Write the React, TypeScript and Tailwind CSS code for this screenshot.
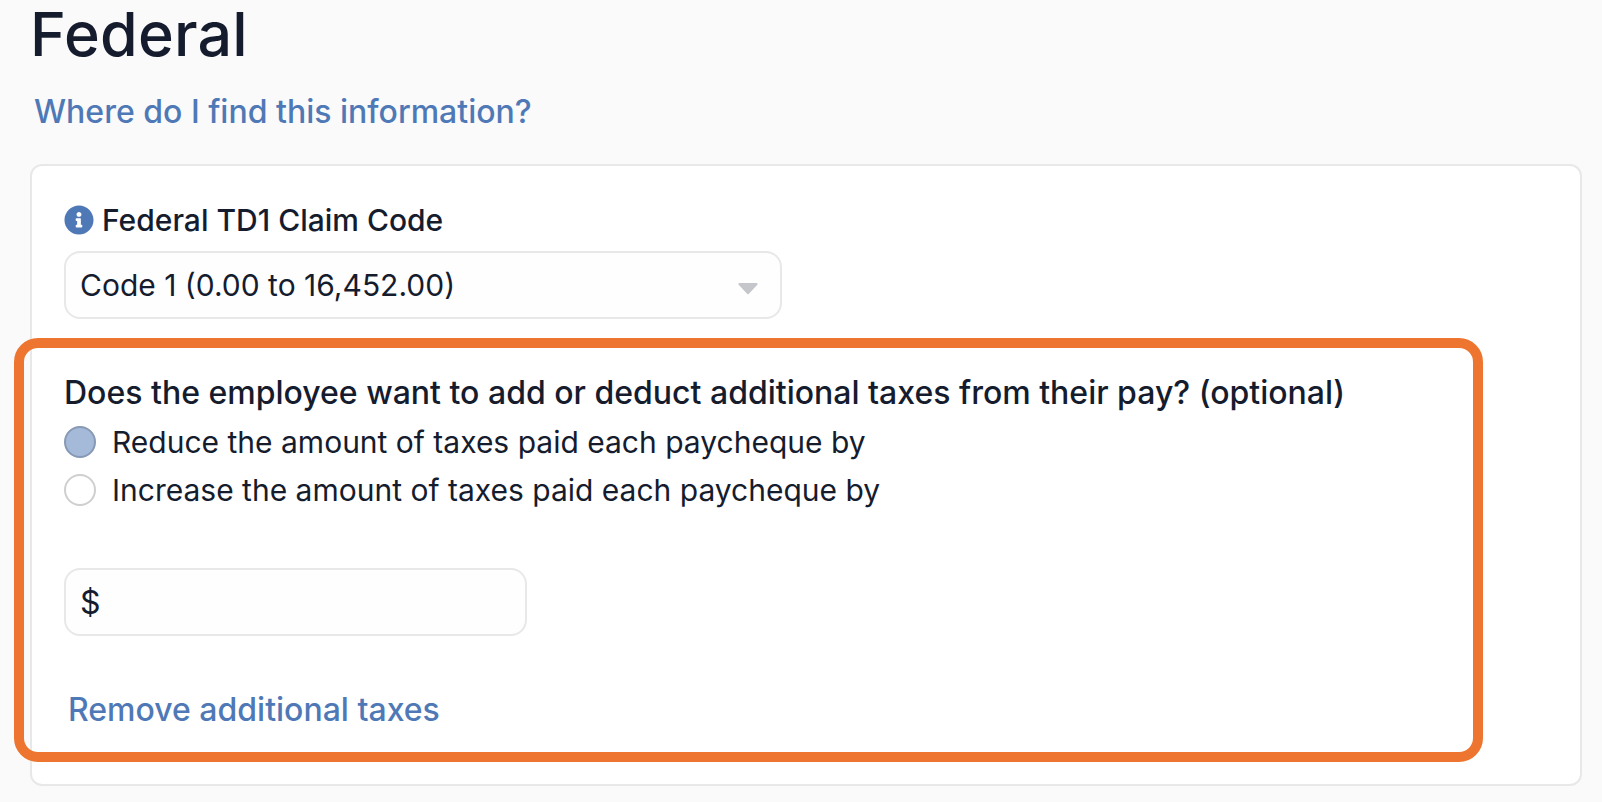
import { useState } from "react";
import { FaInfoCircle } from "react-icons/fa";

interface RadioOptionProps {
  label: string;
  checked: boolean;
  onSelect: () => void;
}

function RadioOption({ label, checked, onSelect }: RadioOptionProps) {
  return (
    <button
      type="button"
      role="radio"
      aria-checked={checked}
      onClick={onSelect}
      className="flex h-12 items-center gap-4 text-left"
    >
      <span
        className={`size-8 shrink-0 rounded-full border-2 ${
          checked ? "border-[#8799b5] bg-[#a5bad9]" : "border-[#cfcfcf] bg-white"
        }`}
      />
      <span className="whitespace-nowrap text-[30px] leading-9">{label}</span>
    </button>
  );
}

const OPTIONS = [
  "Reduce the amount of taxes paid each paycheque by",
  "Increase the amount of taxes paid each paycheque by",
];

export default function App() {
  const [selected, setSelected] = useState(0);

  return (
    <div className="h-[802px] w-[1602px] overflow-hidden bg-[#fafafa] pl-[30px] font-['Inter',sans-serif] text-[#151c2e]">
      <h1 className="h-[72px] text-[61px] font-medium leading-[68px] tracking-[0.2px]">
        Federal
      </h1>
      <a href="#" className="mt-5 ml-1 block h-10 w-fit text-[32px] font-medium leading-10 text-[#4f79b6]">
        Where do I find this information?
      </a>

      {/* Tax details card */}
      <div className="relative mt-8 h-[622px] w-[1552px] rounded-xl border-2 border-[#e8e8e8] bg-white px-8 pt-[34px]">
        <div className="flex h-10 items-center gap-2">
          <FaInfoCircle className="size-[30px] text-[#4f79b6]" />
          <span className="text-[30px] font-medium leading-10">
            Federal TD1 Claim Code
          </span>
        </div>

        <div className="mt-[11px] flex h-[68px] w-[718px] items-center justify-between rounded-2xl border-2 border-[#e8e8e8] bg-[#fefefe] pr-[22px] pl-[14px]">
          <span className="text-[30px] leading-9">Code 1 (0.00 to 16,452.00)</span>
          <svg className="mt-2 h-3 w-5" viewBox="0 0 20 12" fill="#c4c6cc">
            <path d="M1.4 0h17.2c.9 0 1.3 1.1.7 1.7l-8.6 9.2a1 1 0 0 1-1.4 0L.7 1.7C.1 1.1.5 0 1.4 0z" />
          </svg>
        </div>

        <p className="mt-[54px] h-10 whitespace-nowrap text-[32px] font-medium leading-10">
          Does the employee want to add or deduct additional taxes from their pay? (optional)
        </p>
        <div role="radiogroup" className="mt-[5px] flex flex-col items-start">
          {OPTIONS.map((option, index) => (
            <RadioOption
              key={option}
              label={option}
              checked={selected === index}
              onSelect={() => setSelected(index)}
            />
          ))}
        </div>

        <div className="mt-[54px] flex h-[68px] w-[463px] items-center rounded-2xl border-2 border-[#e8e8e8] bg-[#fefefe] px-[14px] pt-0.5 text-[32px]">
          $
        </div>
        <button type="button" className="mt-[54px] ml-1 block h-10 text-[32px] font-medium leading-10 text-[#4f79b6]">
          Remove additional taxes
        </button>

        {/* Highlight around the optional section */}
        <div className="pointer-events-none absolute top-[172px] left-[-18px] h-[424px] w-[1469px] rounded-3xl border-[10px] border-[#ed752f]" />
      </div>
    </div>
  );
}
